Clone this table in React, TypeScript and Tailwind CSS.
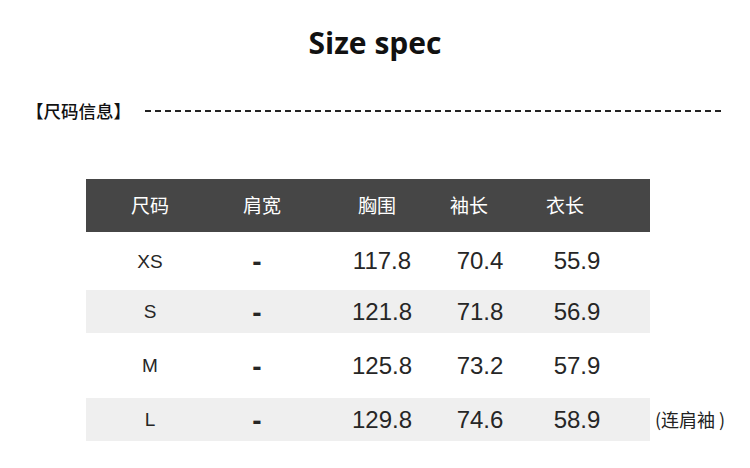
import React from 'react'

const rows = [
    { size: 'XS', chest: '117.8', sleeve: '70.4', length: '55.9', h: 'h-[58px]', bg: 'bg-white' },
    { size: 'S', chest: '121.8', sleeve: '71.8', length: '56.9', h: 'h-[43px]', bg: 'bg-[#efefef]' },
    { size: 'M', chest: '125.8', sleeve: '73.2', length: '57.9', h: 'h-[65px]', bg: 'bg-white' },
    { size: 'L', chest: '129.8', sleeve: '74.6', length: '58.9', h: 'h-[43px]', bg: 'bg-[#efefef]', note: '(连肩袖 )' },
]

const cjk = "font-['Noto_Sans_CJK_SC','Noto_Sans',sans-serif]"
const num = "font-['Liberation_Sans',Arial,sans-serif]"

const Cell = ({ children, className = '' }: any) => (
    <div className={`flex justify-center items-center whitespace-nowrap ${className}`}>{children}</div>
)

const App = () => {
    return (
        <div className="w-[750px] h-[468px] bg-white overflow-hidden flex flex-col">
            <h1 className="pt-[27px] text-center text-[30px] leading-[32px] font-bold text-[#111] font-['Open_Sans','Noto_Sans',sans-serif]">
                Size spec
            </h1>

            <div className="mt-[40px] h-[24px] flex items-center pl-[26px] pr-[28px] gap-[14px]">
                <span className={`text-[17.5px] font-medium text-[#111] ${cjk}`}>【尺码信息】</span>
                <div className="flex-1 h-[1.5px] bg-[repeating-linear-gradient(to_right,#222_0_6px,transparent_6px_10px)]" />
            </div>

            <div className="mt-[56px] ml-[86px] flex flex-col">
                <div className={`w-[564px] h-[53px] bg-[#464646] grid grid-cols-[128px_96px_134px_50px_142px] text-white text-[19px] ${cjk}`}>
                    <Cell>尺码</Cell>
                    <Cell>肩宽</Cell>
                    <Cell>胸围</Cell>
                    <Cell>袖长</Cell>
                    <Cell>衣长</Cell>
                </div>

                {rows.map((r) => (
                    <div key={r.size} className="flex items-center">
                        <div className={`w-[564px] ${r.h} ${r.bg} grid grid-cols-[128px_86px_164px_32px_162px] text-[#262626]`}>
                            <Cell className={`text-[19px] pt-[2px] ${num}`}>{r.size}</Cell>
                            <Cell className={`text-[28px] font-bold leading-none pt-[2px] ${num}`}>-</Cell>
                            <Cell className={`text-[24px] ${num}`}>{r.chest}</Cell>
                            <Cell className={`text-[24px] ${num}`}>{r.sleeve}</Cell>
                            <Cell className={`text-[24px] ${num}`}>{r.length}</Cell>
                        </div>
                        {r.note ? (
                            <span className={`ml-[5px] text-[18px] text-[#222] ${cjk}`}>{r.note}</span>
                        ) : null}
                    </div>
                ))}
            </div>
        </div>
    )
}

export default App
